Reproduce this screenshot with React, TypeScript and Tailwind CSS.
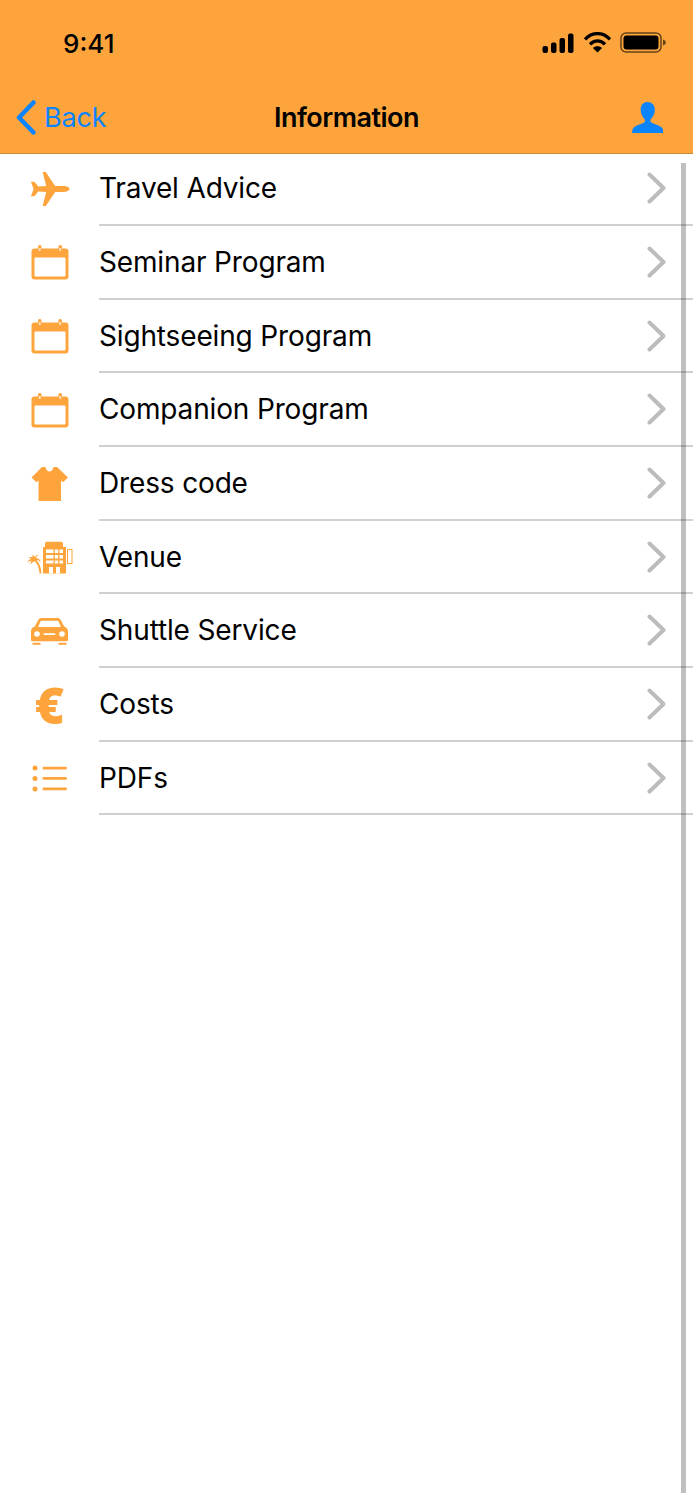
import type { ReactNode } from 'react'

const PlaneIcon = () => (
  <svg width="40" height="34" viewBox="0 0 40 34" fill="#fda53c">
    <path d="M39.500 17c0-1.600-3-2.900-6-2.900h-8.300L15.800 0h-3.200l3.600 14.100-7.900.3-3.900-4.600H.9l2.700 7.200-2.700 7.200h3.500l3.900-4.600 7.900.3L12.600 34h3.200l9.400-14.100h8.300c3 0 6-1.300 6-2.900z" />
  </svg>
)

const CalendarIcon = () => (
  <svg width="38" height="35" viewBox="0 0 38 35">
    <rect x="0.500" y="3.500" width="37" height="31" rx="3" fill="#fda53c" />
    <rect x="3.500" y="12.500" width="31" height="19" rx="1" fill="#fff" />
    <rect x="7" y="0" width="3.500" height="7" rx="1.500" fill="#fda53c" />
    <rect x="27.500" y="0" width="3.500" height="7" rx="1.500" fill="#fda53c" />
    <rect x="7.800" y="3" width="1.900" height="3" fill="#fde3c2" />
    <rect x="28.300" y="3" width="1.900" height="3" fill="#fde3c2" />
  </svg>
)

const ShirtIcon = () => (
  <svg width="37" height="34" viewBox="0 0 37 34" fill="#fda53c">
    <path d="M11 0h3.500c.6 3 2 4.400 4 4.400s3.400-1.400 4-4.400H26l11 10.500-5 4.700-2-1.700V34H7.500V13.500l-2 1.700-5-4.700z" />
  </svg>
)

const VenueIcon = () => (
  <svg width="46" height="33" viewBox="0 0 46 33" fill="#fda53c">
    <path d="M18 2.500C18 1.500 18.800.7 19.800.7h14.400c1 0 1.800.8 1.800 1.800V6h3v26.500H16V6h2z" />
    <g fill="#fff">
      <rect x="19" y="8.500" width="7.500" height="3.500" />
      <rect x="27.800" y="8.500" width="3.400" height="3.500" />
      <rect x="32.500" y="8.500" width="3.500" height="3.500" />
      <rect x="19" y="14" width="7.500" height="3.500" />
      <rect x="27.800" y="14" width="3.400" height="3.500" />
      <rect x="32.500" y="14" width="3.500" height="3.500" />
      <rect x="19" y="19.500" width="7.500" height="3" />
      <rect x="27.800" y="19.500" width="3.400" height="3" />
      <rect x="32.500" y="19.500" width="3.500" height="3" />
      <rect x="22" y="26" width="4" height="6.500" />
      <rect x="29" y="26" width="4" height="6.500" />
    </g>
    <rect x="40.500" y="8.500" width="4.500" height="14" fill="none" stroke="#fda53c" strokeWidth="1" />
    <path d="M14.500 32.500c-.2-5-1.800-10-5-13.300 1.500-.1 3 .4 4.200 1.700-.6-2.300-2.400-3.900-5-3.900.7-1.400 1.900-2.300 3.300-2.700-1.700-.3-3.400.2-4.700 1.600-.2-1.100-.8-2-1.700-2.700.2 1 .1 2-.2 2.900-1.400-.4-3-.2-4.100.5 1.100.2 2 .6 2.700 1.300C1.900 18.600.7 19.800 0 21.500c1.400-1 2.700-1.500 4.300-1.700-.6 1.200-.8 2.400-.6 3.700.9-1.500 2.300-2.800 4.100-3.300 3 3.300 4.500 7.300 4.700 12.300z" />
  </svg>
)

const CarIcon = () => (
  <svg width="37" height="27" viewBox="0 0 37 27">
    <path
      fill="#fda53c"
      d="M10.500 0h16c1.500 0 2.600.7 3.300 2L33 8.300c2.500 1 4 2.700 4 5V22c0 .8-.5 1.200-1.200 1.200H1.200C.5 23.200 0 22.800 0 22v-8.700c0-2.300 1.500-4 4-5L7.200 2C7.900.7 9 0 10.500 0z"
    />
    <path fill="#fff" d="M10.800 2.800h15.400c.6 0 1 .3 1.300.8L30 9H7l2.500-5.400c.3-.5.700-.8 1.300-.8z" />
    <circle cx="6" cy="16" r="2.800" fill="#fff" />
    <circle cx="31" cy="16" r="2.800" fill="#fff" />
    <rect x="12.500" y="15.200" width="12" height="1.800" rx="0.900" fill="#fff" />
    <rect x="1.500" y="24.800" width="8" height="2" fill="#fda53c" />
    <rect x="27.500" y="24.800" width="8" height="2" fill="#fda53c" />
  </svg>
)

const ListIcon = () => (
  <svg width="36" height="27" viewBox="0 0 36 27" fill="#fda53c">
    <circle cx="3" cy="3" r="2.500" />
    <circle cx="3" cy="13.500" r="2.500" />
    <circle cx="3" cy="24" r="2.500" />
    <rect x="10.500" y="1.700" width="24.500" height="2.700" rx="1.300" />
    <rect x="10.500" y="12.100" width="24.500" height="2.700" rx="1.300" />
    <rect x="10.500" y="22.600" width="24.500" height="2.700" rx="1.300" />
  </svg>
)

const EuroIcon = () => (
  <span className="font-['Open_Sans',sans-serif] text-[50px] font-extrabold leading-none text-[#fda53c]">€</span>
)

const rows: { label: string; icon: ReactNode }[] = [
  { label: 'Travel Advice', icon: <PlaneIcon /> },
  { label: 'Seminar Program', icon: <CalendarIcon /> },
  { label: 'Sightseeing Program', icon: <CalendarIcon /> },
  { label: 'Companion Program', icon: <CalendarIcon /> },
  { label: 'Dress code', icon: <ShirtIcon /> },
  { label: 'Venue', icon: <VenueIcon /> },
  { label: 'Shuttle Service', icon: <CarIcon /> },
  { label: 'Costs', icon: <EuroIcon /> },
  { label: 'PDFs', icon: <ListIcon /> },
]

const StatusIcons = () => (
  <div className="flex items-center">
    <svg width="32" height="20" viewBox="0 0 32 20" fill="#000">
      <rect x="0.500" y="13" width="5.500" height="7" rx="2" />
      <rect x="9" y="9.500" width="5.500" height="10.500" rx="2" />
      <rect x="17.500" y="5" width="5.500" height="15" rx="2" />
      <rect x="26" y="0.500" width="5.500" height="19.500" rx="2" />
    </svg>
    <svg className="ml-[9px]" width="29" height="21" viewBox="0 0 29 21" fill="none" stroke="#000" strokeWidth="3.300">
      <path d="M2 7.300C9-.3 20-.3 27 7.300" />
      <path d="M7 12.300c4.400-4.600 10.600-4.600 15 0" />
      <path d="M14.500 20.500l-4.600-4.600c2.600-2.200 6.600-2.200 9.200 0z" fill="#000" stroke="none" />
    </svg>
    <svg className="ml-[8px]" width="46" height="21" viewBox="0 0 46 21">
      <rect x="1" y="1" width="40" height="19" rx="5" fill="none" stroke="#000" strokeOpacity="0.600" strokeWidth="1.500" />
      <rect x="3.500" y="3.500" width="35" height="14" rx="3" fill="#000" />
      <path d="M43 7.500c1.800.6 2.800 1.700 2.800 3s-1 2.400-2.800 3z" fill="#000" fillOpacity="0.600" />
    </svg>
  </div>
)

export default function App() {
  return (
    <div className="relative flex h-[1500px] w-[693px] flex-col overflow-hidden bg-white font-['Inter',sans-serif] text-black">
      <header className="relative z-10 flex h-[154px] flex-col border-b border-[#c98c3e] bg-[#fda53c]">
        <div className="flex h-[88px] items-start justify-between pl-[63px] pr-[27px] pt-[28px]">
          <span className="text-[26px] font-medium leading-[32px]">9:41</span>
          <div className="pt-[4px]">
            <StatusIcons />
          </div>
        </div>
        <nav className="relative flex flex-1 items-center justify-between pl-[16px] pr-[30px] pb-[7px]">
          <div className="flex items-center text-[#0a84ff]">
            <svg width="20" height="35" viewBox="0 0 20 35" fill="none" stroke="#0a84ff" strokeWidth="4.500" strokeLinecap="round" strokeLinejoin="round">
              <path d="M17.500 2.500L3 17.500l14.500 15" />
            </svg>
            <span className="ml-[8px] mt-[2px] text-[27px] leading-[34px] tracking-[-0.2px]">Back</span>
          </div>
          <span className="absolute left-0 right-0 top-[12px] text-center text-[27px] font-semibold leading-[36px] tracking-[-0.5px]">Information</span>
          <svg width="31" height="31" viewBox="0 0 31 31" fill="#0a84ff">
            <path d="M15.500 0c4.300 0 7.300 3.200 7.300 7.700 0 3.700-1.700 7.300-3.800 9.300-.8.800-.9 2.300.1 3.200 2.300 2 8.900 2.700 11.400 6.300.7 1 .9 2.900.9 4.500H.1c0-1.600.2-3.500.9-4.500 2.500-3.600 9.100-4.300 11.400-6.300 1-.9.9-2.400.1-3.200-2.100-2-3.800-5.600-3.800-9.300C8.700 3.200 11.200 0 15.500 0z" />
          </svg>
        </nav>
      </header>

      <ul className="mt-[-1.500px] flex flex-col">
        {rows.map((row) => (
          <li key={row.label} className="flex h-[73.67px]">
            <div className="flex w-[99px] shrink-0 items-center justify-center">{row.icon}</div>
            <div className="flex flex-1 items-center justify-between border-b-2 border-[#d0d0d3] pr-[27px]">
              <span className="text-[28px] leading-[34px] tracking-[-0.15px]">{row.label}</span>
              <svg width="19" height="32" viewBox="0 0 19 32" fill="none" stroke="#bcbcbc" strokeWidth="4" strokeLinecap="round" strokeLinejoin="round">
                <path d="M2.500 2.500L16.500 16 2.500 29.500" />
              </svg>
            </div>
          </li>
        ))}
      </ul>

      {/* scroll indicator sits over the list */}
      <div className="absolute left-[681px] top-[163px] h-[1330px] w-[5px] bg-black/25" />
    </div>
  )
}
